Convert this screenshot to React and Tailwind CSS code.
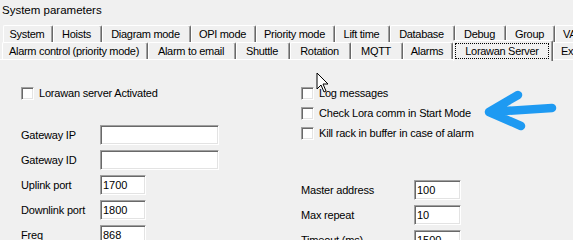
import React from 'react';

const row1 = [
  { label: 'System', w: 50 },
  { label: 'Hoists', w: 49 },
  { label: 'Diagram mode', w: 89 },
  { label: 'OPI mode', w: 65 },
  { label: 'Priority mode', w: 79 },
  { label: 'Lift time', w: 55 },
  { label: 'Database', w: 65 },
  { label: 'Debug', w: 51 },
  { label: 'Group', w: 49 }
];

const row2 = [
  { label: 'Alarm control (priority mode)', w: 146 },
  { label: 'Alarm to email', w: 88 },
  { label: 'Shuttle', w: 54 },
  { label: 'Rotation', w: 61 },
  { label: 'MQTT', w: 52 },
  { label: 'Alarms', w: 50 }
];

const tabBox =
  'h-[17px] shrink-0 flex items-center pt-[1px] pr-[2px] border-t border-l border-r border-t-white border-l-white border-r-[#696969] rounded-t-[2px] shadow-[inset_-1px_0_0_#a0a0a0] bg-[#f0f0f0] whitespace-nowrap tracking-[-0.3px]';

const Tab = ({ label, w }) => (
  <div style={{ width: w }} className={`${tabBox} justify-center`}>
    {label}
  </div>
);

// tabs cut off by the right edge of the window
const EdgeTab = ({ label }) => <div className={`${tabBox} w-[70px] pl-[7px]`}>{label}</div>;

const CheckBox = ({ label }) => (
  <div className="h-[20px] flex items-center gap-[5px]">
    <span className="w-[13px] h-[13px] bg-white border border-t-[#a0a0a0] border-l-[#a0a0a0] border-b-white border-r-white shadow-[inset_1px_1px_0_#696969,inset_-1px_-1px_0_#e3e3e3]" />
    <span className="tracking-[-0.2px]">{label}</span>
  </div>
);

const Field = ({ label, labelW, inputW, value }) => (
  <div className="h-[20px] flex items-center">
    <span style={{ width: labelW }} className="shrink-0 tracking-[-0.2px]">{label}</span>
    <div
      style={{ width: inputW }}
      className="h-[20px] bg-white pl-[2px] flex items-center border border-t-[#a0a0a0] border-l-[#a0a0a0] border-b-white border-r-white shadow-[inset_1px_1px_0_#696969,inset_-1px_-1px_0_#e3e3e3]"
    >
      {value}
    </div>
  </div>
);

export default function App() {
  return (
    <div className="relative w-[573px] h-[240px] overflow-hidden bg-[#f0f0f0] text-black text-[11px] font-['Liberation_Sans',Arial,sans-serif]">
      <div className="h-[25px] pl-[2px] pt-[3px] text-[11.5px] leading-[14px]">System parameters</div>

      <div className="flex pl-[3px]">
        {row1.map((t) => (
          <Tab key={t.label} {...t} />
        ))}
        <EdgeTab label="VAC" />
      </div>

      <div className="relative z-10 flex items-end pl-[2px] h-[18px] -mt-[1px]">
        {row2.map((t) => (
          <Tab key={t.label} {...t} />
        ))}
        <div className="w-[100px] h-[21px] -mb-[2px] shrink-0 flex items-center justify-center pr-[2px] border-t border-l border-r border-t-white border-l-white border-r-[#696969] rounded-t-[2px] shadow-[inset_-1px_0_0_#a0a0a0] bg-[#f0f0f0]">
          <span className="h-[16px] w-[94px] flex items-center justify-center border border-dotted border-black tracking-[-0.3px] whitespace-nowrap">
            Lorawan Server
          </span>
        </div>
        <EdgeTab label="Export" />
      </div>

      <div className="border-t border-white h-[181px] flex pt-[23px]">
        <div className="w-[301px] shrink-0 pl-[21px]">
          <CheckBox label="Lorawan server Activated" />
          <div className="mt-[22px] flex flex-col gap-[5px]">
            <Field label="Gateway IP" labelW={79} inputW={119} value="" />
            <Field label="Gateway ID" labelW={79} inputW={119} value="" />
            <Field label="Uplink port" labelW={79} inputW={46} value="1700" />
            <Field label="Downlink port" labelW={79} inputW={46} value="1800" />
            <Field label="Freq" labelW={79} inputW={46} value="868" />
          </div>
        </div>
        <div className="flex-1">
          <CheckBox label="Log messages" />
          <CheckBox label="Check Lora comm in Start Mode" />
          <CheckBox label="Kill rack in buffer in case of alarm" />
          <div className="mt-[37px] flex flex-col gap-[5px]">
            <Field label="Master address" labelW={113} inputW={47} value="100" />
            <Field label="Max repeat" labelW={113} inputW={47} value="10" />
            <Field label="Timeout (ms)" labelW={113} inputW={47} value="1500" />
          </div>
        </div>
      </div>

      <svg className="absolute left-[482px] top-[88px] z-20" width="80" height="48" viewBox="0 0 80 48">
        <path
          d="M70 20 L7 24 M36 7 L7 24 L39 38"
          fill="none"
          stroke="#1e9af2"
          strokeWidth="8.5"
          strokeLinecap="round"
          strokeLinejoin="round"
        />
      </svg>

      <svg className="absolute left-[316px] top-[72px] z-20" width="14" height="22" viewBox="0 0 14 22">
        <path d="M1 1 L1 17 L5 13 L8 20 L10 19 L7 12 L12 12 Z" fill="white" stroke="black" strokeWidth="1" strokeLinejoin="miter" />
      </svg>
    </div>
  );
}
